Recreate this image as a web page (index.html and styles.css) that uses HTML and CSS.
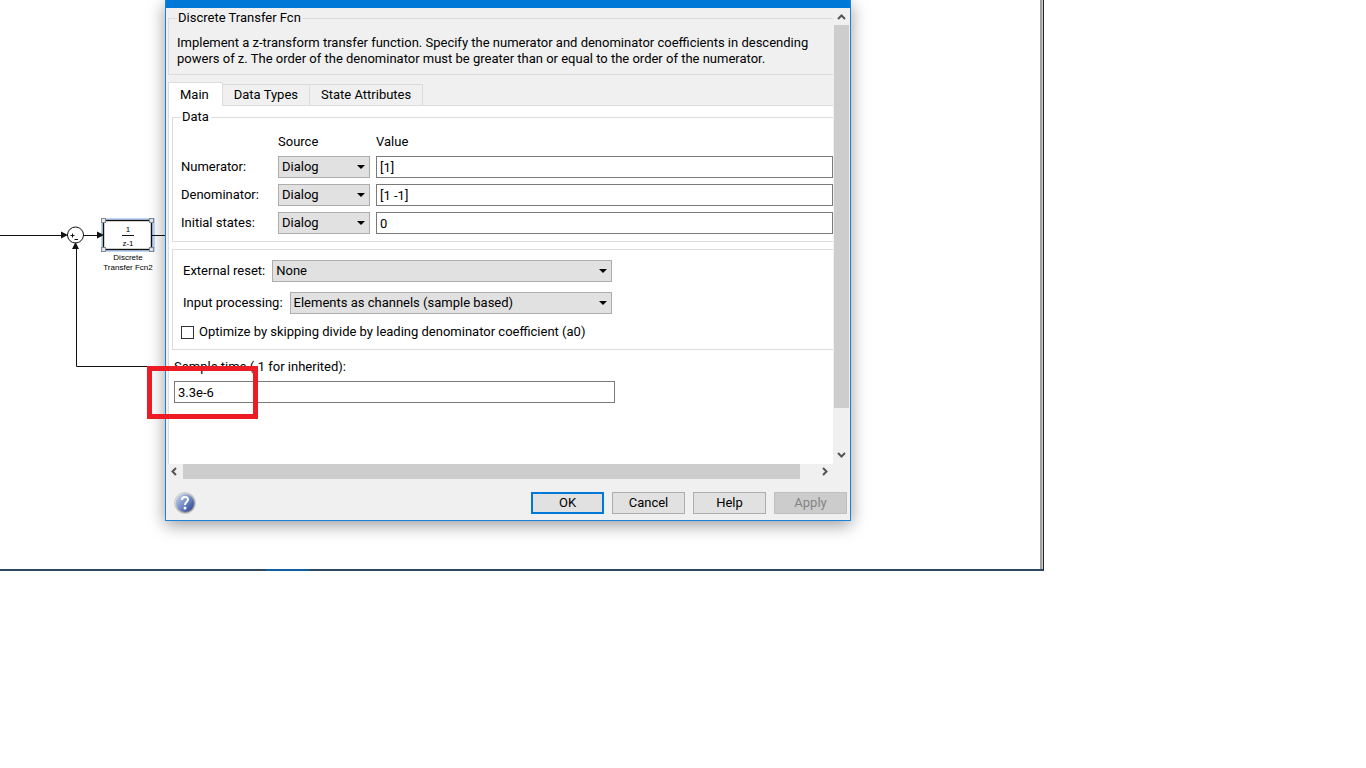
FILE: index.html
```html
<!DOCTYPE html>
<html lang="en">
<head>
  <meta charset="UTF-8" />
  <title>Discrete Transfer Fcn</title>
  <meta name="viewport" content="width=device-width, initial-scale=1.0" />
  <link rel="stylesheet" href="styles.css">
</head>
<body>
  <div class="workspace">
    <!-- Model diagram -->
    <svg class="diagram" width="180" height="400" viewBox="0 0 180 400">
      <rect x="101" y="218" width="54" height="34" fill="#bfd8f8" />
      <rect x="103.500" y="220.500" width="48" height="29" fill="#fff" stroke="#111" stroke-width="1.400" />
      <g stroke="#111" fill="none">
        <path d="M0 235.500H62M84 235.500H98M152 235.500H180M76.500 248V366.500H180" />
        <path d="M122 235.500H134" />
        <circle cx="75.500" cy="235" r="8" fill="#fff" />
        <path d="M70.500 235.500H74.500M72.500 233.500V237.500M74.500 239.500H78" />
      </g>
      <path d="M61 231.500L68 235L61 238.500ZM97 231.500L104 235L97 238.500ZM72 249L75.500 242L79 249Z" fill="#111" />
      <g fill="#dce8f6" stroke="#888">
        <rect x="101.500" y="218.500" width="4" height="4" />
        <rect x="149.500" y="218.500" width="4" height="4" />
        <rect x="101.500" y="247.500" width="4" height="4" />
        <rect x="149.500" y="247.500" width="4" height="4" />
      </g>
      <g class="diagram-text">
        <text x="128" y="232">1</text>
        <text x="128" y="246">z-1</text>
        <text x="128" y="260">Discrete</text>
        <text x="128" y="270">Transfer Fcn2</text>
      </g>
    </svg>

    <form class="dialog">
      <div class="titlebar"></div>
      <div class="view">
        <div class="content">
          <fieldset class="about">
            <legend>Discrete Transfer Fcn</legend>
            <p>Implement a z-transform transfer function. Specify the numerator and denominator coefficients in descending<br>powers of z. The order of the denominator must be greater than or equal to the order of the numerator.</p>
          </fieldset>

          <div class="tabs">
            <button type="button" class="tab active">Main</button>
            <button type="button" class="tab">Data Types</button>
            <button type="button" class="tab">State Attributes</button>
          </div>

          <div class="panel">
            <fieldset class="data">
              <legend>Data</legend>
              <div class="grid">
                <span></span><span>Source</span><span>Value</span>
                <label for="num">Numerator:</label>
                <div class="select"><select aria-label="Numerator source"><option>Dialog</option></select></div>
                <input type="text" id="num" value="[1]" />
                <label for="den">Denominator:</label>
                <div class="select"><select aria-label="Denominator source"><option>Dialog</option></select></div>
                <input type="text" id="den" value="[1 -1]" />
                <label for="init">Initial states:</label>
                <div class="select"><select aria-label="Initial states source"><option>Dialog</option></select></div>
                <input type="text" id="init" value="0" />
              </div>
            </fieldset>

            <fieldset class="options">
              <div class="row">
                <label for="reset">External reset:</label>
                <div class="select"><select id="reset"><option>None</option></select></div>
              </div>
              <div class="row">
                <label for="proc">Input processing:</label>
                <div class="select"><select id="proc"><option>Elements as channels (sample based)</option></select></div>
              </div>
              <div class="check">
                <input type="checkbox" id="opt" />
                <label for="opt">Optimize by skipping divide by leading denominator coefficient (a0)</label>
              </div>
            </fieldset>

            <div class="sample">
              <label for="time">Sample time (-1 for inherited):</label>
              <input type="text" id="time" value="3.3e-6" />
            </div>
          </div>
        </div>

        <div class="vscroll">
          <svg class="arrow" viewBox="0 0 15 17"><path d="M4 11L7.500 7.500L11 11" /></svg>
          <div class="thumb"></div>
          <svg class="arrow" viewBox="0 0 15 17"><path d="M4 6L7.500 9.500L11 6" /></svg>
        </div>

        <div class="hscroll">
          <svg class="arrow" viewBox="0 0 17 15"><path d="M10 4L6.500 7.500L10 11" /></svg>
          <div class="thumb"></div>
          <svg class="arrow" viewBox="0 0 17 15"><path d="M6 4L9.500 7.500L6 11" /></svg>
        </div>
      </div>

      <div class="footer">
        <button type="button" class="help" aria-label="Help topics">
          <svg width="22" height="22" viewBox="0 0 22 22">
            <defs>
              <linearGradient id="rim" x1="0" y1="0" x2="1" y2="1">
                <stop offset="0" stop-color="#f4f4f4" />
                <stop offset="1" stop-color="#777" />
              </linearGradient>
              <linearGradient id="ball" x1="0" y1="0" x2="1" y2="1">
                <stop offset="0.200" stop-color="#a9bce4" />
                <stop offset="1" stop-color="#1c3a8c" />
              </linearGradient>
            </defs>
            <circle cx="11" cy="11" r="10.500" fill="url(#rim)" stroke="#ccc" />
            <circle cx="11" cy="11" r="9" fill="url(#ball)" />
            <path d="M8 8C8 4 14 4 14 7.500C14 10 11 10 11 13" fill="none" stroke="#fff" stroke-width="2" />
            <circle cx="11" cy="16" r="1.500" fill="#fff" />
          </svg>
        </button>
        <button type="submit" class="btn default">OK</button>
        <button type="button" class="btn">Cancel</button>
        <button type="button" class="btn">Help</button>
        <button type="button" class="btn" disabled>Apply</button>
      </div>
    </form>

    <div class="highlight"></div>
    <div class="accent"></div>
  </div>
</body>
</html>
```

FILE: styles.css
```css
* {
  box-sizing: border-box;
}
body {
  margin: 0;
  background: #fff;
  color: #000;
  font: 13px/16px Roboto, Tahoma, sans-serif;
}
button, input, select {
  font: inherit;
  color: inherit;
  margin: 0;
  border-radius: 0;
}
.workspace {
  position: relative;
  width: calc(100% - 322px);
  padding: 0 192px 48px 165px;
  border-right: 1px solid #20262c;
  border-bottom: 2px solid #2a4860;
  box-shadow: inset -1px 0 #ccc, inset -3px 0 #a0a0a0;
}
.diagram {
  position: absolute;
  left: 0;
  top: 0;
}
.diagram-text {
  font: 8px "Liberation Sans", Arial, sans-serif;
  text-anchor: middle;
}

/* Dialog window */
.dialog {
  position: relative;
  border: 1px solid #1883d7;
  border-top: 0;
  background: #f0f0f0;
  box-shadow: 0 4px 16px rgba(0, 0, 0, 0.4);
}
.titlebar {
  height: 8px;
  background: #0078d7;
}
.view {
  display: grid;
  grid-template-columns: 1fr 16px;
  grid-template-rows: 456px 15px;
}
.content {
  display: flex;
  flex-direction: column;
  min-width: 0;
  padding: 2px 1px 0 2px;
  overflow: hidden;
  white-space: nowrap;
}
fieldset {
  min-width: 0;
  margin: 0;
  border: 1px solid #dcdcdc;
  border-right: 0;
}
legend {
  padding: 0 2px 0 1px;
}
.about {
  padding: 9px 0 7px 8px;
}
.about p {
  margin: 0;
}

/* Tabs */
.tabs {
  display: flex;
  align-items: flex-end;
  height: 24px;
  margin-top: 7px;
  box-shadow: inset 0 -1px #dcdcdc;
}
.tab {
  height: 22px;
  padding: 0 11px;
  border: 1px solid #dcdcdc;
  border-left: 0;
  background: #f0f0f0;
}
.tab.active {
  height: 24px;
  padding: 0 13px 0 11px;
  border-left: 1px solid #dcdcdc;
  border-bottom: 0;
  background: #fff;
}
.panel {
  flex: 1;
  padding: 3px 0 0 3px;
  border-left: 1px solid #dcdcdc;
  background: #fff;
}
.data {
  padding: 9px 0 7px 8px;
}
.grid {
  display: grid;
  grid-template-columns: 91px 92px 1fr;
  gap: 6px;
  align-items: center;
}
.select {
  position: relative;
}
.select select {
  display: block;
  width: 100%;
  height: 22px;
  padding: 0 16px 0 3px;
  border: 1px solid #adadad;
  background: #e1e1e1;
  appearance: none;
}
.select::after {
  content: "";
  position: absolute;
  top: 9px;
  right: 5px;
  border: 4px solid transparent;
  border-top-color: #000;
  border-bottom: 0;
}
input[type="text"] {
  display: block;
  width: 100%;
  height: 22px;
  padding: 0 3px;
  border: 1px solid #7a7a7a;
  background: #fff;
}
.options {
  display: grid;
  gap: 10px;
  margin-top: 7px;
  padding: 10px 0 9px 8px;
}
.row {
  display: flex;
  align-items: center;
  gap: 7px;
  width: 431px;
  padding-left: 2px;
}
.row .select {
  flex: 1;
}
.check {
  display: flex;
  align-items: center;
  gap: 5px;
}
.check input {
  width: 13px;
  height: 13px;
  border: 1px solid #333;
  background: #fff;
  appearance: none;
}
.sample {
  display: grid;
  gap: 6px;
  width: 443px;
  padding: 9px 0 0 2px;
}

/* Scroll bars */
.arrow {
  flex: none;
  fill: none;
  stroke: #555;
  stroke-width: 2;
}
.thumb {
  flex: 1;
  background: #cdcdcd;
}
.vscroll {
  display: flex;
  flex-direction: column;
  width: 15px;
}
.vscroll .arrow {
  height: 17px;
}
.vscroll .thumb {
  margin-bottom: 39px;
}
.hscroll {
  display: flex;
}
.hscroll .arrow {
  width: 17px;
}
.hscroll .thumb {
  margin-right: 17px;
}

/* Buttons */
.footer {
  display: flex;
  gap: 8px;
  padding: 13px 3px 6px 8px;
}
.help {
  width: 22px;
  height: 22px;
  margin-right: auto;
  padding: 0;
  border: 0;
  background: none;
}
.btn {
  width: 73px;
  height: 22px;
  padding: 0;
  border: 1px solid #adadad;
  background: #e1e1e1;
}
.btn.default {
  border: 2px solid #0078d7;
}
.btn:disabled {
  border-color: #bfbfbf;
  background: #ccc;
  color: #838383;
}

/* Marks drawn over the windows */
.highlight {
  position: absolute;
  left: 147px;
  top: 366px;
  width: 111px;
  height: 53px;
  border: 5px solid #ed1c24;
}
.accent {
  position: absolute;
  left: 266px;
  bottom: -2px;
  width: 43px;
  height: 2px;
  background: #1060a0;
}
```
